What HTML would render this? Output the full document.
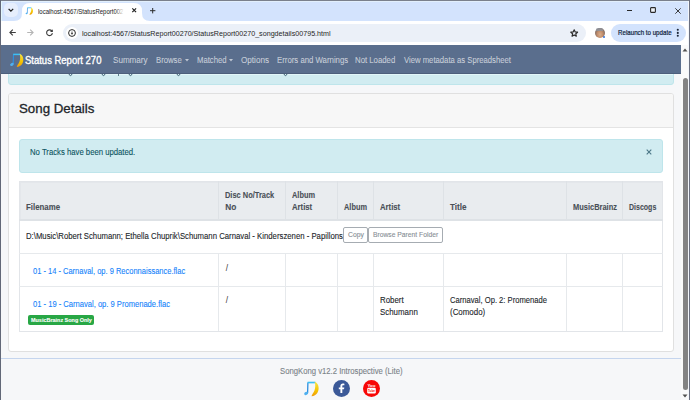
<!DOCTYPE html>
<html><head><meta charset="utf-8"><style>
html,body{margin:0;padding:0;width:690px;height:400px;overflow:hidden;background:#fff}
body>*{position:absolute;display:block}
.t{position:absolute;white-space:nowrap;line-height:1;transform-origin:0 0;font-family:"Liberation Sans",sans-serif;-webkit-text-stroke-width:0.1px}
svg{position:absolute;overflow:visible}
.mk{display:inline-block;width:0;height:0;vertical-align:baseline}
</style></head><body>
<div style="left:0px;top:0px;width:690px;height:21px;background:#d3e3fd"></div>
<div style="left:0px;top:0px;width:690px;height:1px;background:#7a808c"></div>
<div style="left:4px;top:3px;width:14px;height:14px;background:#e6eefc;border-radius:5px"></div>
<svg style="left:7px;top:6px" width="8" height="8" viewBox="0 0 8 8"><path d="M1.6 2.9 L3.9 5.1 L6.2 2.9" fill="none" stroke="#1f1f1f" stroke-width="1.3"/></svg>
<svg style="left:14px;top:3px" width="136" height="18" viewBox="0 0 136 18"><path d="M0 18 Q8 18 8 10 L8 8 Q8 0 16 0 L120 0 Q128 0 128 8 L128 10 Q128 18 136 18 Z" fill="#fff"/></svg>
<div style="left:0px;top:21px;width:690px;height:24px;background:#fff"></div>
<svg style="left:25.3px;top:6.6px" width="8.4" height="8.4" viewBox="0 0 15 15"><defs><linearGradient id="yg" x1="0" y1="0" x2="0" y2="1"><stop offset="0" stop-color="#f7e64a"/><stop offset=".6" stop-color="#f5c400"/><stop offset="1" stop-color="#f09a0c"/></linearGradient></defs><path d="M4.5 1.4 L4.2 10.9" stroke="#2f8fe0" stroke-width="1.2" fill="none"/><path d="M4.2 1.4 L11.4 1.4" stroke="#3cc0f5" stroke-width="1.5" fill="none"/><ellipse cx="2.9" cy="11.4" rx="1.9" ry="1.4" transform="rotate(-25 2.9 11.4)" fill="#4fb0f0"/><path d="M10.6 0.7 C14.8 2.2 15.2 7.8 13.1 11 C11.9 12.8 10.1 13.8 7.8 14 C7.9 12.6 9.6 11 10.5 8.6 C11.3 6.4 11.6 3.4 10.6 0.7 Z" fill="url(#yg)"/></svg>
<div style="left:38px;top:5px;width:88px;height:14px;overflow:hidden">
<div class="t" style="left:0px;top:3.31px;font-size:7.6px;color:#1f1f1f;transform:scaleX(0.7902);-webkit-text-stroke-width:0.05px;">localhost:4567/StatusReport00270/StatusReport00270_songdetails00795.html</div>
</div>
<div style="left:115px;top:4px;width:12px;height:16px;background:linear-gradient(90deg,rgba(255,255,255,0),#fff 75%)"></div>
<svg style="left:131.8px;top:8.1px" width="4.4" height="4.4" viewBox="0 0 4.4 4.4"><path d="M0.3 0.3L4.1 4.1M4.1 0.3L0.3 4.1" stroke="#1f1f1f" stroke-width="1.15"/></svg>
<svg style="left:149.9px;top:7.5px" width="5.4" height="5.4" viewBox="0 0 5.4 5.4"><path d="M2.7 0V5.4M0 2.7H5.4" stroke="#2a2a2a" stroke-width="1"/></svg>
<div style="left:627px;top:9.6px;width:5.2000000000000455px;height:1.200000000000001px;background:#2a2a2a"></div>
<svg style="left:650.4px;top:7.4px" width="6" height="6" viewBox="0 0 6 6"><rect x="0.6" y="0.6" width="4.8" height="4.8" rx="0.6" fill="#eef2f8" stroke="#2a2a2a" stroke-width="1.1"/></svg>
<svg style="left:674.6px;top:7.5px" width="6" height="6" viewBox="0 0 6 6"><path d="M0.3 0.3L5.7 5.7M5.7 0.3L0.3 5.7" stroke="#2a2a2a" stroke-width="0.9"/></svg>
<svg style="left:8.5px;top:28.9px" width="7" height="7" viewBox="0 0 7 7"><path d="M6.8 3.5H1M3.8 0.6L0.9 3.5L3.8 6.4" fill="none" stroke="#3c3c3c" stroke-width="1.1"/></svg>
<svg style="left:27.2px;top:28.9px" width="7" height="7" viewBox="0 0 7 7"><path d="M0.2 3.5H6M3.2 0.6L6.1 3.5L3.2 6.4" fill="none" stroke="#b4b4b4" stroke-width="1.1"/></svg>
<svg style="left:46px;top:28.9px" width="7" height="7" viewBox="0 0 7 7"><path d="M6.1 2.4 A2.9 2.9 0 1 0 6.4 4.2" fill="none" stroke="#3c3c3c" stroke-width="1.1"/><path d="M6.8 0.2 V3 H4" fill="#3c3c3c"/></svg>
<div style="left:63px;top:24px;width:523px;height:18px;background:#ebf0f8;border-radius:9px"></div>
<div style="left:65.75px;top:26.75px;width:12px;height:12px;border-radius:6px;background:#fff"></div>
<svg style="left:67.75px;top:28.75px" width="8" height="8" viewBox="0 0 8 8"><circle cx="4" cy="4" r="3.4" fill="none" stroke="#2a2a2a" stroke-width="1"/><circle cx="4" cy="4.5" r="1.1" fill="#555"/><path d="M4 2.2V4" stroke="#777" stroke-width="0.8"/></svg>
<div class="t" style="left:82px;top:30.21px;font-size:7.7px;color:#262626;transform:scaleX(0.9292);-webkit-text-stroke-width:0px;">localhost:4567/StatusReport00270/StatusReport00270_songdetails00795.html</div>
<svg style="left:569.6px;top:28.6px" width="8.4" height="8" viewBox="0 0 24 23"><path d="M12 2.2l2.9 6.3 6.8.7-5.1 4.6 1.5 6.8L12 17.1l-6.1 3.5 1.5-6.8-5.1-4.6 6.8-.7z" fill="none" stroke="#2a2a2a" stroke-width="3.4" stroke-linejoin="round"/></svg>
<div style="left:594.6px;top:27.8px;width:10.2px;height:10.2px;border-radius:50%;background:radial-gradient(ellipse at 50% 65%,#d9ae8c 0,#c08d6c 40%,#7d6a62 75%,#8f939b 100%)"></div><div style="left:596px;top:27.8px;width:7.4px;height:3px;border-radius:50% 50% 0 0;background:#8d949e;opacity:.8"></div><div style="left:602.5px;top:35.6px;width:2px;height:2px;border-radius:50%;background:#2f6fd6"></div>
<div style="left:611px;top:24px;width:75px;height:18px;background:#d3e3fd;border-radius:9px"></div>
<div class="t" style="left:617.6px;top:29.41px;font-size:7.3px;color:#0b1a38;transform:scaleX(0.8465);-webkit-text-stroke:0.2px #0b1a38;">Relaunch to update</div>
<svg style="left:676px;top:27px" width="4" height="12" viewBox="0 0 4 12"><circle cx="1.8" cy="2.8" r="1.05" fill="#1a2536"/><circle cx="1.8" cy="5.9" r="1.05" fill="#1a2536"/><circle cx="1.8" cy="8.8" r="1.05" fill="#1a2536"/></svg>
<div style="left:1px;top:45px;width:680px;height:355px;background:#f6f7f9"></div>
<div style="left:8px;top:60px;width:666px;height:25px;background:#d1ecf1;border:1px solid #bee5eb;border-radius:3px;box-sizing:border-box"></div>
<div style="left:9px;top:74px;width:664px;height:1px;background:#e2f6f9"></div>
<svg style="left:68.3px;top:72px" width="5" height="5" viewBox="0 0 5 5"><path d="M0.9 0.5 Q0.9 3.6 2.5 3.6 Q4.1 3.6 4.1 0.5" fill="none" stroke="#34586c" stroke-width="1"/></svg>
<svg style="left:100.5px;top:72px" width="5" height="5" viewBox="0 0 5 5"><path d="M0.9 0.5 Q0.9 3.6 2.5 3.6 Q4.1 3.6 4.1 0.5" fill="none" stroke="#34586c" stroke-width="1"/></svg>
<svg style="left:128.1px;top:72px" width="5" height="5" viewBox="0 0 5 5"><path d="M0.9 0.5 Q0.9 3.6 2.5 3.6 Q4.1 3.6 4.1 0.5" fill="none" stroke="#34586c" stroke-width="1"/></svg>
<svg style="left:176.0px;top:72px" width="5" height="5" viewBox="0 0 5 5"><path d="M0.9 0.5 Q0.9 3.6 2.5 3.6 Q4.1 3.6 4.1 0.5" fill="none" stroke="#34586c" stroke-width="1"/></svg>
<svg style="left:282.7px;top:72px" width="5" height="5" viewBox="0 0 5 5"><path d="M0.9 0.5 Q0.9 3.6 2.5 3.6 Q4.1 3.6 4.1 0.5" fill="none" stroke="#34586c" stroke-width="1"/></svg>
<div style="left:117.6px;top:73px;width:1.0px;height:2.5px;background:#5a7a88"></div>
<div style="left:1px;top:45px;width:680px;height:29px;background:#5a6e8d;border-bottom:1px solid #4d5f7c;box-sizing:border-box"></div>
<svg style="left:9px;top:53px" width="15" height="15" viewBox="0 0 15 15"><defs><linearGradient id="yg" x1="0" y1="0" x2="0" y2="1"><stop offset="0" stop-color="#f7e64a"/><stop offset=".6" stop-color="#f5c400"/><stop offset="1" stop-color="#f09a0c"/></linearGradient></defs><path d="M4.5 1.4 L4.2 10.9" stroke="#2f8fe0" stroke-width="1.2" fill="none"/><path d="M4.2 1.4 L11.4 1.4" stroke="#3cc0f5" stroke-width="1.5" fill="none"/><ellipse cx="2.9" cy="11.4" rx="1.9" ry="1.4" transform="rotate(-25 2.9 11.4)" fill="#4fb0f0"/><path d="M10.6 0.7 C14.8 2.2 15.2 7.8 13.1 11 C11.9 12.8 10.1 13.8 7.8 14 C7.9 12.6 9.6 11 10.5 8.6 C11.3 6.4 11.6 3.4 10.6 0.7 Z" fill="url(#yg)"/></svg>
<div class="t" style="left:24.6px;top:55.72px;font-size:10.2px;color:#ffffff;transform:scaleX(0.9304);-webkit-text-stroke:0.35px #fff;">Status Report 270</div>
<div class="t" style="left:113.4px;top:56.40px;font-size:8.3px;color:rgba(255,255,255,.62);transform:scaleX(0.9743);">Summary</div>
<div class="t" style="left:156px;top:56.40px;font-size:8.3px;color:rgba(255,255,255,.62);transform:scaleX(0.9322);">Browse</div>
<svg style="left:184.5px;top:59px" width="4" height="3" viewBox="0 0 4 3"><path d="M0 0H4L2 2.5Z" fill="rgba(255,255,255,.62)"/></svg>
<div class="t" style="left:196.5px;top:56.40px;font-size:8.3px;color:rgba(255,255,255,.62);transform:scaleX(0.9298);">Matched</div>
<svg style="left:229px;top:59px" width="4" height="3" viewBox="0 0 4 3"><path d="M0 0H4L2 2.5Z" fill="rgba(255,255,255,.62)"/></svg>
<div class="t" style="left:240.8px;top:56.40px;font-size:8.3px;color:rgba(255,255,255,.62);transform:scaleX(0.9789);">Options</div>
<div class="t" style="left:276.6px;top:56.40px;font-size:8.3px;color:rgba(255,255,255,.62);transform:scaleX(0.9393);">Errors and Warnings</div>
<div class="t" style="left:355px;top:56.40px;font-size:8.3px;color:rgba(255,255,255,.62);transform:scaleX(0.9390);">Not Loaded</div>
<div class="t" style="left:403.6px;top:56.40px;font-size:8.3px;color:rgba(255,255,255,.62);transform:scaleX(0.9288);">View metadata as Spreadsheet</div>
<div style="left:8px;top:93px;width:666px;height:259px;background:#fff;border:1px solid #e0e0e0;border-radius:3px;box-sizing:border-box"></div>
<div style="left:9px;top:94px;width:664px;height:34px;background:#f7f7f7;border-bottom:1px solid #e4e4e4;border-radius:2px 2px 0 0;box-sizing:border-box"></div>
<div class="t" style="left:19.4px;top:101.60px;font-size:13.1px;color:#212529;transform:scaleX(1.0151);-webkit-text-stroke-width:0.3px;">Song Details</div>
<div style="left:19px;top:139px;width:644px;height:34px;background:#d1ecf1;border:1px solid #bee5eb;border-radius:3px;box-sizing:border-box"></div>
<div class="t" style="left:30px;top:148.31px;font-size:8.3px;color:#0c5460;transform:scaleX(0.9315);">No Tracks have been updated.</div>
<svg style="left:646px;top:149px" width="6" height="6" viewBox="0 0 6 6"><path d="M0.7 0.7L5.3 5.3M5.3 0.7L0.7 5.3" stroke="#4b7787" stroke-width="1.1"/></svg>
<div style="left:19px;top:181px;width:644px;height:151px;border:1px solid #e2e5e9;box-sizing:border-box"></div>
<div style="left:20px;top:182px;width:642px;height:37px;background:#e9ecef"></div>
<div style="left:20px;top:182px;width:642px;height:1px;background:#e4e7eb"></div>
<div style="left:20px;top:182px;width:1px;height:37px;background:#e4e7eb"></div>
<div style="left:19px;top:218.5px;width:644px;height:2.0px;background:#dee2e6"></div>
<div style="left:218.0px;top:181px;width:1.0px;height:39px;background:#dee2e6"></div>
<div style="left:218.0px;top:253.5px;width:1.0px;height:77.5px;background:#e6e9ec"></div>
<div style="left:285.3px;top:181px;width:1.0px;height:39px;background:#dee2e6"></div>
<div style="left:285.3px;top:253.5px;width:1.0px;height:77.5px;background:#e6e9ec"></div>
<div style="left:336.9px;top:181px;width:1.0px;height:39px;background:#dee2e6"></div>
<div style="left:336.9px;top:253.5px;width:1.0px;height:77.5px;background:#e6e9ec"></div>
<div style="left:373.1px;top:181px;width:1.0px;height:39px;background:#dee2e6"></div>
<div style="left:373.1px;top:253.5px;width:1.0px;height:77.5px;background:#e6e9ec"></div>
<div style="left:443.1px;top:181px;width:1.0px;height:39px;background:#dee2e6"></div>
<div style="left:443.1px;top:253.5px;width:1.0px;height:77.5px;background:#e6e9ec"></div>
<div style="left:566.2px;top:181px;width:1.0px;height:39px;background:#dee2e6"></div>
<div style="left:566.2px;top:253.5px;width:1.0px;height:77.5px;background:#e6e9ec"></div>
<div style="left:621.9px;top:181px;width:1.0px;height:39px;background:#dee2e6"></div>
<div style="left:621.9px;top:253.5px;width:1.0px;height:77.5px;background:#e6e9ec"></div>
<div style="left:19px;top:253px;width:644px;height:1px;background:#e6e9ec"></div>
<div style="left:19px;top:286px;width:644px;height:1px;background:#e6e9ec"></div>
<div class="t" style="left:26px;top:203.31px;font-size:8.3px;color:#495057;font-weight:bold;transform:scaleX(0.9450);">Filename</div>
<div class="t" style="left:225.3px;top:191.01px;font-size:8.3px;color:#495057;font-weight:bold;transform:scaleX(0.8962);">Disc No/Track</div>
<div class="t" style="left:225.3px;top:203.21px;font-size:8.3px;color:#495057;font-weight:bold;">No</div>
<div class="t" style="left:291.8px;top:191.01px;font-size:8.3px;color:#495057;font-weight:bold;transform:scaleX(0.8908);">Album</div>
<div class="t" style="left:291.8px;top:203.21px;font-size:8.3px;color:#495057;font-weight:bold;transform:scaleX(0.9320);">Artist</div>
<div class="t" style="left:343.8px;top:203.21px;font-size:8.3px;color:#495057;font-weight:bold;transform:scaleX(0.8908);">Album</div>
<div class="t" style="left:379.7px;top:203.21px;font-size:8.3px;color:#495057;font-weight:bold;transform:scaleX(0.9320);">Artist</div>
<div class="t" style="left:449.7px;top:203.21px;font-size:8.3px;color:#495057;font-weight:bold;transform:scaleX(0.9756);">Title</div>
<div class="t" style="left:572.6px;top:203.21px;font-size:8.3px;color:#495057;font-weight:bold;transform:scaleX(0.9000);">MusicBrainz</div>
<div class="t" style="left:628.8px;top:203.21px;font-size:8.3px;color:#495057;font-weight:bold;transform:scaleX(0.8455);">Discogs</div>
<div class="t" style="left:25.8px;top:232.31px;font-size:8.3px;color:#212529;transform:scaleX(0.9349);">D:\Music\Robert Schumann; Ethella Chuprik\Schumann Carnaval - Kinderszenen - Papillons</div>
<div style="left:343px;top:227px;width:25px;height:15.5px;border:1px solid #a6acb2;border-radius:2px;box-sizing:border-box;background:#fff"></div>
<div style="left:367.5px;top:227px;width:75.5px;height:15.5px;border:1px solid #a6acb2;border-radius:2px;box-sizing:border-box;background:#fff"></div>
<div class="t" style="left:347.8px;top:231.40px;font-size:7.2px;color:#868d94;transform:scaleX(0.9459);">Copy</div>
<div class="t" style="left:372.7px;top:231.40px;font-size:7.2px;color:#868d94;transform:scaleX(0.9378);">Browse Parent Folder</div>
<div class="t" style="left:32.8px;top:266.60px;font-size:8.3px;color:#1583fb;transform:scaleX(0.9038);">01 - 14 - Carnaval, op. 9 Reconnaissance.flac</div>
<div class="t" style="left:225.8px;top:263.51px;font-size:8.3px;color:#333;-webkit-text-stroke-width:0;">/</div>
<div class="t" style="left:32.8px;top:299.81px;font-size:8.3px;color:#1583fb;transform:scaleX(0.9137);">01 - 19 - Carnaval, op. 9 Promenade.flac</div>
<div class="t" style="left:225.8px;top:296.31px;font-size:8.3px;color:#333;-webkit-text-stroke-width:0;">/</div>
<div style="left:28.2px;top:315.3px;width:66.0px;height:9.300000000000011px;background:#28a745;border-radius:2px"></div>
<div class="t" style="left:30.8px;top:317.21px;font-size:6.2px;color:#fff;font-weight:bold;transform:scaleX(0.8810);">MusicBrainz Song Only</div>
<div class="t" style="left:380.1px;top:295.71px;font-size:8.3px;color:#212529;transform:scaleX(0.9473);">Robert</div>
<div class="t" style="left:380.3px;top:307.81px;font-size:8.3px;color:#212529;transform:scaleX(0.9526);">Schumann</div>
<div class="t" style="left:449.5px;top:295.71px;font-size:8.3px;color:#212529;transform:scaleX(0.9181);">Carnaval, Op. 2: Promenade</div>
<div class="t" style="left:449.5px;top:307.81px;font-size:8.3px;color:#212529;transform:scaleX(0.9539);">(Comodo)</div>
<div style="left:1px;top:358px;width:680px;height:1px;background:#c5d5ee"></div>
<div class="t" style="left:279.6px;top:366.51px;font-size:8.3px;color:#7a8288;transform:scaleX(0.9291);">SongKong v12.2 Introspective (Lite)</div>
<svg style="left:302.6px;top:380.8px" width="16.4" height="16.4" viewBox="0 0 15 15"><defs><linearGradient id="yg" x1="0" y1="0" x2="0" y2="1"><stop offset="0" stop-color="#f7e64a"/><stop offset=".6" stop-color="#f5c400"/><stop offset="1" stop-color="#f09a0c"/></linearGradient></defs><path d="M4.5 1.4 L4.2 10.9" stroke="#2f8fe0" stroke-width="1.2" fill="none"/><path d="M4.2 1.4 L11.4 1.4" stroke="#3cc0f5" stroke-width="1.5" fill="none"/><ellipse cx="2.9" cy="11.4" rx="1.9" ry="1.4" transform="rotate(-25 2.9 11.4)" fill="#4fb0f0"/><path d="M10.6 0.7 C14.8 2.2 15.2 7.8 13.1 11 C11.9 12.8 10.1 13.8 7.8 14 C7.9 12.6 9.6 11 10.5 8.6 C11.3 6.4 11.6 3.4 10.6 0.7 Z" fill="url(#yg)"/></svg>
<div style="left:333px;top:380px;width:17px;height:17px;border-radius:50%;background:#3b5998"></div>
<svg style="left:333px;top:380px" width="17" height="17" viewBox="0 0 17 17"><path d="M9.3 13.1V9.2H11L11.3 7.4H9.3V6.3C9.3 5.7 9.5 5.3 10.3 5.3H11.4V3.7C11.1 3.7 10.5 3.6 9.9 3.6C8.4 3.6 7.4 4.5 7.4 6.1V7.4H5.8V9.2H7.4V13.1Z" fill="#fff"/></svg>
<div style="left:363px;top:380px;width:17px;height:17px;border-radius:50%;background:#f70707"></div>
<svg style="left:363px;top:380px" width="17" height="17" viewBox="0 0 17 17"><text x="8.5" y="6.8" font-family="Liberation Sans" font-size="4.4" font-weight="bold" fill="#fff" text-anchor="middle">You</text><rect x="4.2" y="7.8" width="8.6" height="5.6" rx="1.2" fill="#fff"/><text x="8.5" y="12.4" font-family="Liberation Sans" font-size="4.2" font-weight="bold" fill="#f50a0a" text-anchor="middle" textLength="7" lengthAdjust="spacingAndGlyphs">Tube</text></svg>
<div style="left:681px;top:45px;width:8px;height:355px;background:#fafafa"></div>
<svg style="left:681px;top:47px" width="8" height="6" viewBox="0 0 8 6"><path d="M1.5 4.5H6.5L4 1.5Z" fill="#505050"/></svg>
<div style="left:683.3px;top:78px;width:4.7000000000000455px;height:312.3px;background:#838383;border-radius:2.5px"></div>
<svg style="left:681px;top:393px" width="8" height="6" viewBox="0 0 8 6"><path d="M1.5 1.5H6.5L4 4.5Z" fill="#505050"/></svg>
<div style="left:1px;top:1px;width:687px;height:1px;background:#e2effc"></div>
<div style="left:1px;top:1px;width:1px;height:20px;background:#e2f6fc"></div>
<div style="left:0px;top:0px;width:1px;height:400px;background:#626878"></div>
<div style="left:688px;top:1px;width:1px;height:399px;background:#f3f6fb"></div>
<div style="left:689px;top:0px;width:1px;height:400px;background:#6b7080"></div>
</body></html>
